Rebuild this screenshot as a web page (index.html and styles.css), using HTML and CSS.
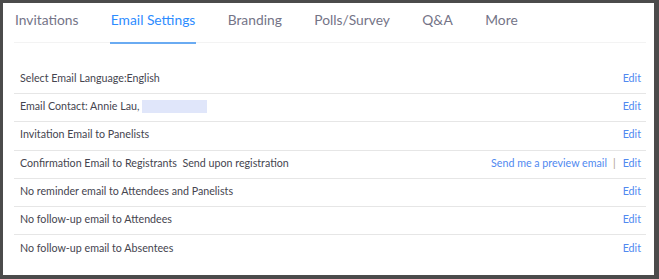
FILE: index.html
```html
<!DOCTYPE html>
<html>
<head>
<meta charset="utf-8">
<link rel="stylesheet" href="styles.css">
</head>
<body>
<div class="frame">
  <div class="panel">
    <nav class="tabs">
      <span class="tab">Invitations</span>
      <span class="tab active">Email Settings</span>
      <span class="tab">Branding</span>
      <span class="tab">Polls/Survey</span>
      <span class="tab">Q&amp;A</span>
      <span class="tab">More</span>
    </nav>
    <div class="rows">
      <div class="row"><span class="label">Select Email Language:English</span><span class="actions"><a class="link">Edit</a></span></div>
      <div class="row"><span class="label">Email Contact: Annie Lau, <span class="redacted"></span></span><span class="actions"><a class="link">Edit</a></span></div>
      <div class="row"><span class="label">Invitation Email to Panelists</span><span class="actions"><a class="link">Edit</a></span></div>
      <div class="row"><span class="label">Confirmation Email to Registrants&nbsp;&nbsp;Send upon registration</span><span class="actions"><a class="link">Send me a preview email</a><span class="sep">|</span><a class="link">Edit</a></span></div>
      <div class="row"><span class="label">No reminder email to Attendees and Panelists</span><span class="actions"><a class="link">Edit</a></span></div>
      <div class="row"><span class="label">No follow-up email to Attendees</span><span class="actions"><a class="link">Edit</a></span></div>
      <div class="row last"><span class="label">No follow-up email to Absentees</span><span class="actions"><a class="link">Edit</a></span></div>
    </div>
  </div>
</div>
</body>
</html>
```
FILE: styles.css
```css
html, body {
  margin: 0;
  padding: 0;
  background: #4b4b4b;
}
.frame {
  width: 659px;
  height: 279px;
  box-sizing: border-box;
  padding: 3px 5px 4px 3px;
  background: #4b4b4b;
}
.panel {
  background: #ffffff;
  height: 100%;
  box-sizing: border-box;
  padding: 0 8px 0 11px;
  font-family: Lato, "Open Sans", sans-serif;
}
.tabs {
  display: flex;
  align-items: flex-start;
  height: 39px;
  border-bottom: 1px solid #f3f3f3;
}
.tab {
  font-size: 13.8px;
  color: #747487;
  padding: 0 1px;
  margin-right: 30.4px;
  line-height: 33px;
  box-sizing: border-box;
  height: 39px;
}
.tab.active {
  color: #2d8cff;
  border-bottom: 2px solid #6aabf2;
  height: 41px;
}
.rows {
  padding-top: 23px;
}
.row {
  display: flex;
  justify-content: space-between;
  align-items: center;
  box-sizing: border-box;
  height: 28.2px;
  border-bottom: 1px solid #e6e6e6;
  padding: 0 5px 4px 6px;
  font-size: 10.7px;
  color: #45454f;
}
.row.last {
  border-bottom: none;
}
.redacted {
  display: inline-block;
  width: 65px;
  height: 13px;
  background: #e0e6fa;
  vertical-align: -3px;
}
.actions {
  display: flex;
  align-items: center;
}
.link {
  color: #5089f0;
}
.sep {
  color: #b0a08c;
  margin: 0 7px 0 6px;
}
```
